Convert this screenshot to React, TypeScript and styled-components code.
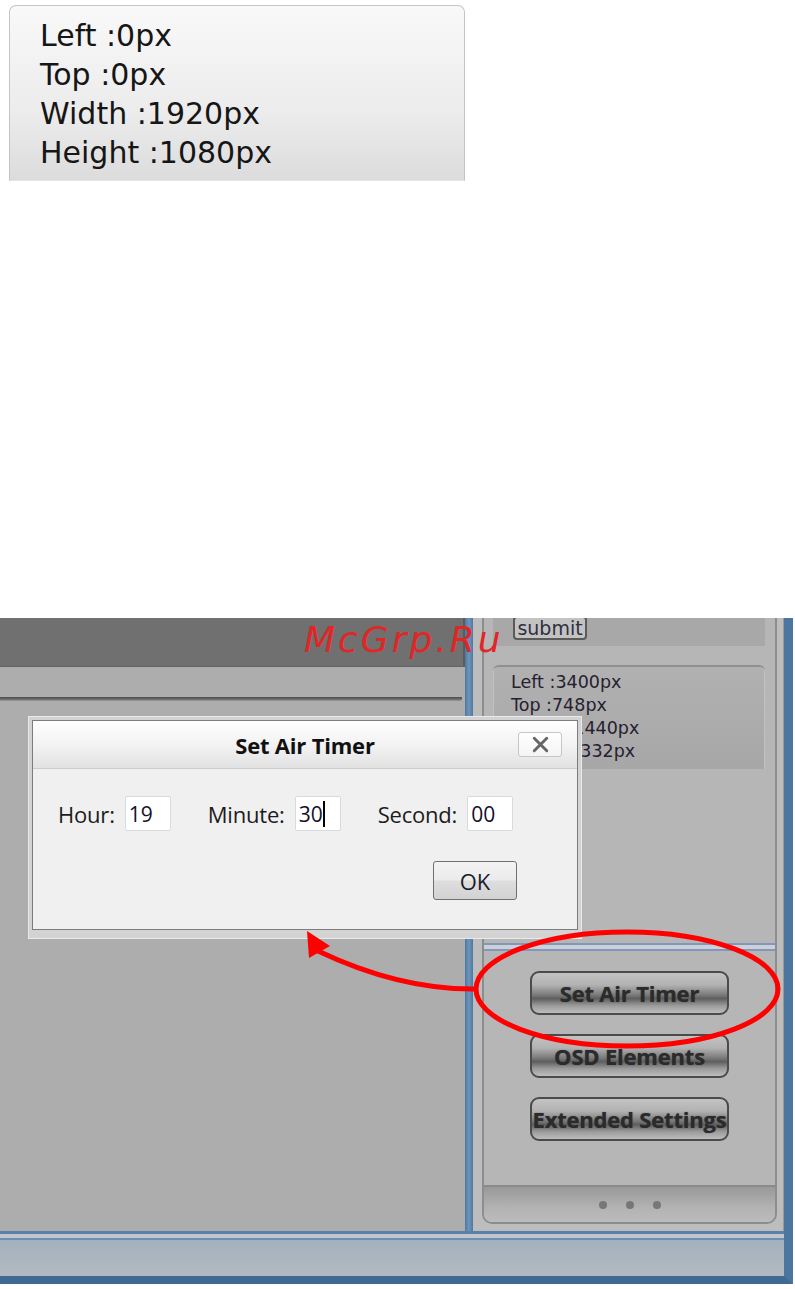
import React from "react";
import styled, { createGlobalStyle } from "styled-components";
import { X } from "lucide-react";

const GlobalStyle = createGlobalStyle`
  html, body {
    margin: 0;
    padding: 0;
    background: #fff;
  }
  body {
    font-family: "Open Sans", "Liberation Sans", sans-serif;
  }
`;

const Page = styled.div`
  display: flex;
  flex-direction: column;
  width: 795px;
  height: 1289px;
  overflow: hidden;
`;

const InfoCard = styled.div`
  margin: 5px 0 0 9px;
  width: 456px;
  height: 176px;
  box-sizing: border-box;
  padding: 10px 0 0 30px;
  border: 1px solid #c4c4c4;
  border-bottom-color: #e4e4e4;
  border-radius: 7px 7px 0 0;
  background: linear-gradient(#f9f9f9, #ececec 60%, #dcdcdc);
  font-family: "DejaVu Sans", sans-serif;
  font-size: 30px;
  line-height: 39px;
  color: #161616;
`;

const Screen = styled.div`
  position: relative;
  margin-top: 437px;
  width: 793px;
  height: 666px;
  box-sizing: border-box;
  display: flex;
  flex-direction: column;
  border-right: 9px solid #4a76a0;
  border-bottom: 8px solid #416a92;
`;

const MainRow = styled.div`
  display: flex;
  height: 613px;
`;

const LeftPane = styled.div`
  width: 465px;
  display: flex;
  flex-direction: column;
  background: #adadad;
`;

const DarkHeader = styled.div`
  height: 49px;
  box-sizing: border-box;
  background: #707070;
  border-bottom: 1px solid #626262;
  border-right: 2px solid #5c5c5c;
`;

const ToolStrip = styled.div`
  height: 30px;
  background: #adadad;
`;

const RuleLine = styled.div`
  height: 4px;
  margin-right: 3px;
  border-radius: 0 0 2px 0;
  background: linear-gradient(#4c4c4c, #6a6a6a 55%, #9c9c9c);
`;

const Canvas = styled.div`
  flex: 1;
  background: #adadad;
`;

const Splitter = styled.div`
  width: 8px;
  background: linear-gradient(to right, #4d78a1, #6e96bb 50%, #4d78a1);
`;

const Side = styled.div`
  flex: 1;
  display: flex;
  box-sizing: border-box;
  padding: 0 6px 7px 9px;
  background: #bdbdbd;
  border-right: 1px solid #9a9a9a;
`;

const Panel = styled.div`
  flex: 1;
  display: flex;
  flex-direction: column;
  overflow: hidden;
  background: #b6b6b6;
  border: 2px solid #8d8d8d;
  border-top: none;
  border-radius: 0 0 10px 10px;
`;

const SubmitSection = styled.div`
  flex-shrink: 0;
  height: 28px;
  margin: 0 10px 0 9px;
  padding-left: 20px;
  background: #a8a8a8;
`;

const SubmitButton = styled.div`
  margin-top: -2px;
  width: 74px;
  height: 24px;
  box-sizing: border-box;
  border: 2px solid #5a5a5a;
  border-radius: 4px;
  background: #c3c3c3;
  color: #303040;
  font-family: "DejaVu Sans", sans-serif;
  font-size: 19px;
  line-height: 20px;
  text-align: center;
`;

const CoordsBox = styled.div`
  flex-shrink: 0;
  height: 104px;
  margin: 19px 10px 0 9px;
  box-sizing: border-box;
  padding: 4px 0 0 18px;
  border-top: 2px solid #8f8f8f;
  border-radius: 6px 6px 0 0;
  background: linear-gradient(#b1b1b1, #a7a7a7);
  box-shadow: inset 1px 0 0 #c2c2c2, inset -1px 0 0 #c2c2c2;
  font-family: "DejaVu Sans", sans-serif;
  font-size: 17.5px;
  line-height: 23px;
  color: #262030;
`;

const Divider = styled.div`
  flex-shrink: 0;
  height: 9px;
  margin: 174px -1px 0;
  background: linear-gradient(
    #8198bc 0 2px,
    #ccd1d8 2px 6px,
    #8198bc 6px 8px,
    #b6b6b6 8px
  );
`;

const ButtonStack = styled.div`
  display: flex;
  flex-direction: column;
  align-items: center;
  gap: 19px;
  padding-top: 19px;
`;

const ActionButton = styled.div`
  width: 199px;
  height: 44px;
  box-sizing: border-box;
  display: flex;
  align-items: center;
  justify-content: center;
  white-space: nowrap;
  border: 2px solid #4b4b4b;
  border-radius: 9px;
  background: linear-gradient(
    #c3c3c3 0%,
    #b2b2b2 30%,
    #7a7a7a 55%,
    #5e5e5e 64%,
    #9c9c9c 82%,
    #bdbdbd 100%
  );
  color: #2b2b2b;
  font-size: 22px;
  font-weight: 700;
  letter-spacing: -0.2px;
  text-shadow: 0 0 1px rgba(30, 30, 30, 0.6);
`;

const Footer = styled.div`
  margin-top: auto;
  height: 37px;
  box-sizing: border-box;
  display: flex;
  justify-content: center;
  align-items: center;
  gap: 19px;
  border-top: 2px solid #8a8a8a;
  background: linear-gradient(#999999, #b3b3b3 60%, #bcbcbc);
`;

const Dot = styled.span`
  width: 8px;
  height: 8px;
  border-radius: 50%;
  background: #777;
`;

const StatusBar = styled.div`
  flex: 1;
  border-top: 3px solid #5c80a7;
  background: linear-gradient(
    #c0c6cd 0 4px,
    #6f8fb2 4px 6px,
    #a2b1be 6px,
    #b3babf 100%
  );
`;

const Watermark = styled.div`
  position: absolute;
  left: 304px;
  top: 1px;
  font-family: "DejaVu Sans", sans-serif;
  font-style: italic;
  font-size: 36px;
  letter-spacing: 3px;
  color: #e02626;
`;

const DialogFrame = styled.div`
  position: absolute;
  left: 28px;
  top: 98px;
  padding: 3px 3px 8px;
  background: #d3d3d3;
  border: 1px solid #e9e9e9;
`;

const Dialog = styled.div`
  width: 546px;
  box-sizing: border-box;
  border: 1px solid #7c7c7c;
  background: #f0f0f0;
`;

const TitleBar = styled.div`
  height: 48px;
  box-sizing: border-box;
  display: grid;
  grid-template-columns: 1fr auto 1fr;
  align-items: center;
  border-bottom: 1px solid #cdcdcd;
  background: linear-gradient(#fefefe, #f3f3f3 50%, #e2e2e2);
`;

const Title = styled.div`
  grid-column: 2;
  font-size: 22px;
  font-weight: 700;
  letter-spacing: -0.2px;
  color: #111;
`;

const CloseButton = styled.div`
  grid-column: 3;
  justify-self: end;
  margin-right: 15px;
  width: 44px;
  height: 25px;
  box-sizing: border-box;
  display: flex;
  align-items: center;
  justify-content: center;
  border: 1px solid #c6c6c6;
  border-radius: 3px;
  background: linear-gradient(#ffffff, #f4f4f4);
  color: #666;
`;

const DialogBody = styled.div`
  padding: 27px 60px 29px 25px;
`;

const FieldRow = styled.div`
  display: flex;
  align-items: center;
  gap: 37px;
`;

const Field = styled.div`
  display: flex;
  align-items: center;
  gap: 10px;
`;

const Label = styled.span`
  font-size: 22px;
  letter-spacing: -0.2px;
  color: #1c1c1c;
`;

const TimeInput = styled.div`
  width: 46px;
  height: 35px;
  box-sizing: border-box;
  display: flex;
  align-items: center;
  padding-left: 3px;
  border: 1px solid #d6dbe1;
  border-radius: 2px;
  background: #fff;
  font-size: 21px;
  color: #14102a;
`;

const Caret = styled.span`
  width: 2px;
  height: 26px;
  background: #000;
`;

const ButtonRow = styled.div`
  display: flex;
  justify-content: flex-end;
  margin-top: 30px;
`;

const OkButton = styled.div`
  width: 84px;
  height: 39px;
  box-sizing: border-box;
  display: flex;
  align-items: center;
  justify-content: center;
  border: 1px solid #707070;
  border-radius: 3px;
  background: linear-gradient(#f3f3f3 0%, #ebebeb 48%, #dedede 52%, #d2d2d2 100%);
  font-size: 22px;
  color: #1c1c2a;
`;

const Annotation = styled.svg`
  position: absolute;
  left: 0;
  top: 0;
  overflow: visible;
  pointer-events: none;
`;

const fields = [
  { label: "Hour:", value: "19" },
  { label: "Minute:", value: "30", focused: true },
  { label: "Second:", value: "00" },
];

const actions = ["Set Air Timer", "OSD Elements", "Extended Settings"];

export default function App() {
  return (
    <Page>
      <GlobalStyle />
      <InfoCard>
        <div>Left :0px</div>
        <div>Top :0px</div>
        <div>Width :1920px</div>
        <div>Height :1080px</div>
      </InfoCard>

      <Screen>
        <MainRow>
          <LeftPane>
            <DarkHeader />
            <ToolStrip />
            <RuleLine />
            <Canvas />
          </LeftPane>
          <Splitter />
          <Side>
            <Panel>
              <SubmitSection>
                <SubmitButton>submit</SubmitButton>
              </SubmitSection>
              <CoordsBox>
                <div>Left :3400px</div>
                <div>Top :748px</div>
                <div>Width :1440px</div>
                <div>Height :332px</div>
              </CoordsBox>
              <Divider />
              <ButtonStack>
                {actions.map((a) => (
                  <ActionButton key={a}>{a}</ActionButton>
                ))}
              </ButtonStack>
              <Footer>
                <Dot />
                <Dot />
                <Dot />
              </Footer>
            </Panel>
          </Side>
        </MainRow>
        <StatusBar />

        <Watermark>McGrp.Ru</Watermark>

        <DialogFrame>
          <Dialog>
            <TitleBar>
              <Title>Set Air Timer</Title>
              <CloseButton>
                <X size={25} strokeWidth={2.8} />
              </CloseButton>
            </TitleBar>
            <DialogBody>
              <FieldRow>
                {fields.map((f) => (
                  <Field key={f.label}>
                    <Label>{f.label}</Label>
                    <TimeInput>
                      {f.value}
                      {f.focused && <Caret />}
                    </TimeInput>
                  </Field>
                ))}
              </FieldRow>
              <ButtonRow>
                <OkButton>OK</OkButton>
              </ButtonRow>
            </DialogBody>
          </Dialog>
        </DialogFrame>

        <Annotation width="793" height="666" viewBox="0 0 793 666">
          <ellipse
            cx="627"
            cy="371"
            rx="151"
            ry="57"
            fill="none"
            stroke="#ff0000"
            strokeWidth="5"
          />
          <path
            d="M476 371 Q400 372 318 333"
            fill="none"
            stroke="#ff0000"
            strokeWidth="5"
          />
          <polygon points="307,313 330,328 309,340" fill="#ff0000" />
        </Annotation>
      </Screen>
    </Page>
  );
}
